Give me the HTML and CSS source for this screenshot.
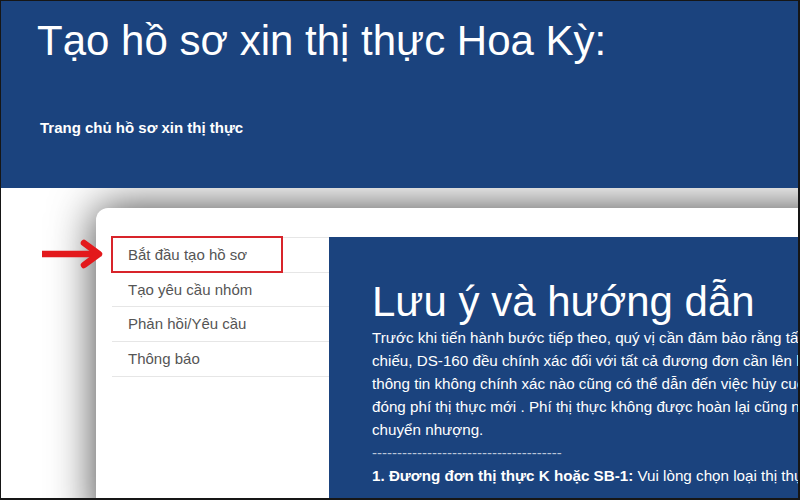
FILE: index.html
```html
<!DOCTYPE html>
<html lang="vi">
<head>
<meta charset="UTF-8">
<meta name="viewport" content="width=device-width, initial-scale=1.0">
<title>Tạo hồ sơ xin thị thực Hoa Kỳ</title>
<link rel="stylesheet" href="styles.css">
</head>
<body>
<div class="page">
  <div class="head">
    <h1>Tạo hồ sơ xin thị thực Hoa Kỳ:</h1>
    <div class="crumb">Trang chủ hồ sơ xin thị thực</div>
  </div>

  <div class="main">
    <!-- mũi tên chú thích -->
    <svg class="arrow" width="64" height="30" viewBox="0 0 64 30">
      <line x1="2" y1="15" x2="56" y2="15" stroke="#e3191c" stroke-width="6.5"/>
      <polyline points="44,4 59,15 44,26" fill="none" stroke="#e3191c" stroke-width="6.5" stroke-linecap="round" stroke-linejoin="round"/>
    </svg>

    <div class="card">
      <ul class="menu">
        <li>Bắt đầu tạo hồ sơ<span class="mark"></span></li>
        <li>Tạo yêu cầu nhóm</li>
        <li>Phản hồi/Yêu cầu</li>
        <li>Thông báo</li>
      </ul>

      <div class="panel">
        <h2>Lưu ý và hướng dẫn</h2>
        <p class="note">
          Trước khi tiến hành bước tiếp theo, quý vị cần đảm bảo rằng tất cả thông tin trên hộ<br>
          chiếu, DS-160 đều chính xác đối với tất cả đương đơn cần lên lịch hẹn. Bất kỳ<br>
          thông tin không chính xác nào cũng có thể dẫn đến việc hủy cuộc hẹn và quý vị sẽ phải<br>
          đóng phí thị thực mới . Phí thị thực không được hoàn lại cũng như không thể<br>
          chuyển nhượng.
        </p>
        <div class="dash">--------------------------------------</div>
        <p class="step"><b>1. Đương đơn thị thực K hoặc SB-1:</b> Vui lòng chọn loại thị thực phù hợp</p>
      </div>
    </div>
  </div>
</div>
</body>
</html>
```

FILE: styles.css
```css
*{box-sizing:border-box;margin:0;padding:0}
body{background:#fff;font-family:"Liberation Sans", Arial, sans-serif}
.page{width:800px;height:500px;border:1px solid #161616;border-right-width:2px;border-bottom-width:2px;overflow:hidden;background:#fff}
.head{position:relative;z-index:2;height:187px;background:#1b437e;color:#fff;padding:19px 0 0 36px}
.head h1{font-size:42px;line-height:42px;font-weight:normal}
.crumb{font-size:15px;line-height:20px;font-weight:bold;margin:56px 0 0 3px}
.main{position:relative;display:flex;padding:20px 0 0 95px}
.arrow{position:absolute;left:39px;top:51px;z-index:3}
.card{display:flex;flex:none;width:760px;height:320px;background:#fff;border-radius:12px 0 0 0;padding:29px 0 0 16px;box-shadow:0 0 45px rgba(0,0,0,.75)}
.menu{position:relative;list-style:none;width:217px;flex:none;border-top:1px solid #e6e6e6;align-self:flex-start}
.menu li{font-size:15px;line-height:20px;color:#555;padding:7px 0 6.7px 16px;border-bottom:1px solid #e6e6e6}
.mark{position:absolute;left:-1px;top:-2px;width:172px;height:37px;border:2px solid #d8242a}
.panel{flex:1;background:#1b437e;color:#fff;padding:44px 0 0 43px;white-space:nowrap;overflow:hidden}
.panel h2{font-size:42px;line-height:42px;font-weight:normal}
.note{font-size:15.2px;line-height:23px;margin-top:3px}
.dash{font-size:15px;line-height:23px;color:#b9c5d9}
.step{font-size:15.2px;line-height:23px}
```
